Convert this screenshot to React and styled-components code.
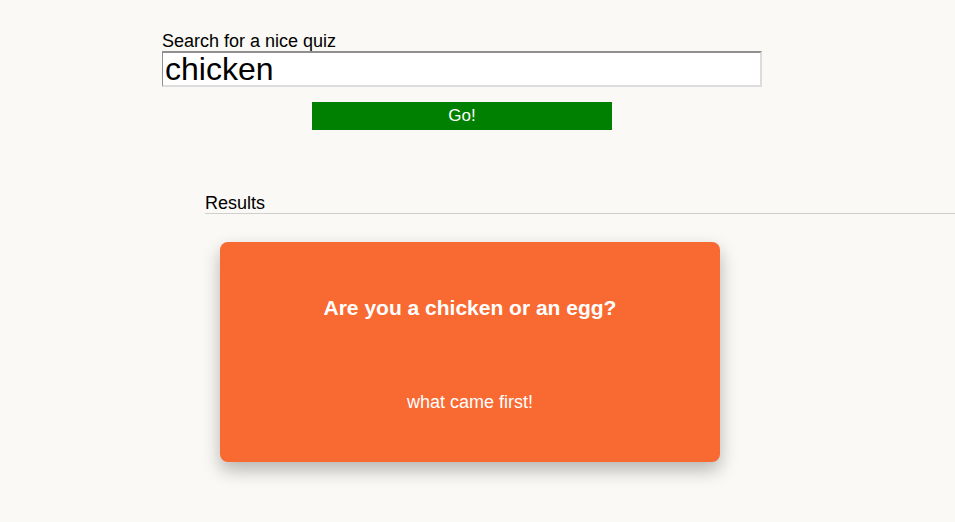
import React, { useState } from 'react'
import styled, { createGlobalStyle } from 'styled-components'

const GlobalStyle = createGlobalStyle`
  body {
    margin: 0;
    background: #faf9f5;
    font-family: "Liberation Sans", Arial, sans-serif;
    color: #000;
  }
`

const quizzes = [
  { title: 'Are you a chicken or an egg?', description: 'what came first!' },
]

export default function App() {
  const [query, setQuery] = useState('chicken')

  return (
    <>
      <GlobalStyle />
      <Page>
        <SearchForm onSubmit={(e) => e.preventDefault()}>
          <Label htmlFor="search">Search for a nice quiz</Label>
          <SearchInput
            id="search"
            value={query}
            onChange={(e) => setQuery(e.target.value)}
          />
          <GoButton type="submit">Go!</GoButton>
        </SearchForm>
        <Results>
          <ResultsHeading>Results</ResultsHeading>
          <CardList>
            {quizzes.map((quiz) => (
              <QuizCard key={quiz.title}>
                <QuizTitle>{quiz.title}</QuizTitle>
                <QuizDescription>{quiz.description}</QuizDescription>
              </QuizCard>
            ))}
          </CardList>
        </Results>
      </Page>
    </>
  )
}

const Page = styled.div`
  display: flex;
  flex-direction: column;
  padding-top: 31px;
`

const SearchForm = styled.form`
  display: flex;
  flex-direction: column;
  width: 600px;
  margin-left: 162px;
`

const Label = styled.label`
  font-size: 18px;
  line-height: 20px;
`

const SearchInput = styled.input`
  box-sizing: border-box;
  width: 600px;
  height: 36px;
  padding: 0 1px 0 2px;
  border-style: solid;
  border-width: 2px 2px 2px 1px;
  border-color: #8f8f8f #dcdcdc #dcdcdc #8f8f8f;
  background: #fff;
  font-family: "Liberation Sans", Arial, sans-serif;
  font-size: 32px;
  color: #000;
  outline: none;
`

const GoButton = styled.button`
  align-self: center;
  width: 300px;
  height: 28px;
  margin-top: 15px;
  border: none;
  background: #008000;
  color: #fff;
  font-family: "Liberation Sans", Arial, sans-serif;
  font-size: 17px;
  cursor: pointer;
`

const Results = styled.section`
  display: flex;
  flex-direction: column;
  margin-top: 64px;
  margin-left: 205px;
`

const ResultsHeading = styled.h2`
  margin: 0;
  font-size: 18px;
  font-weight: normal;
  line-height: 19px;
  border-bottom: 1px solid #cfcfcb;
`

const CardList = styled.div`
  display: flex;
  flex-wrap: wrap;
  gap: 20px;
  padding: 28px 15px;
`

const QuizCard = styled.div`
  box-sizing: border-box;
  display: flex;
  flex-direction: column;
  justify-content: space-between;
  align-items: center;
  width: 500px;
  height: 220px;
  padding: 54px 20px 50px;
  border-radius: 8px;
  background: #f96a33;
  color: #fff;
  box-shadow: 0 8px 18px rgba(0, 0, 0, 0.28);
`

const QuizTitle = styled.h3`
  margin: 0;
  font-size: 21px;
  font-weight: bold;
  line-height: 24px;
`

const QuizDescription = styled.p`
  margin: 0;
  font-size: 18px;
  line-height: 20px;
`
